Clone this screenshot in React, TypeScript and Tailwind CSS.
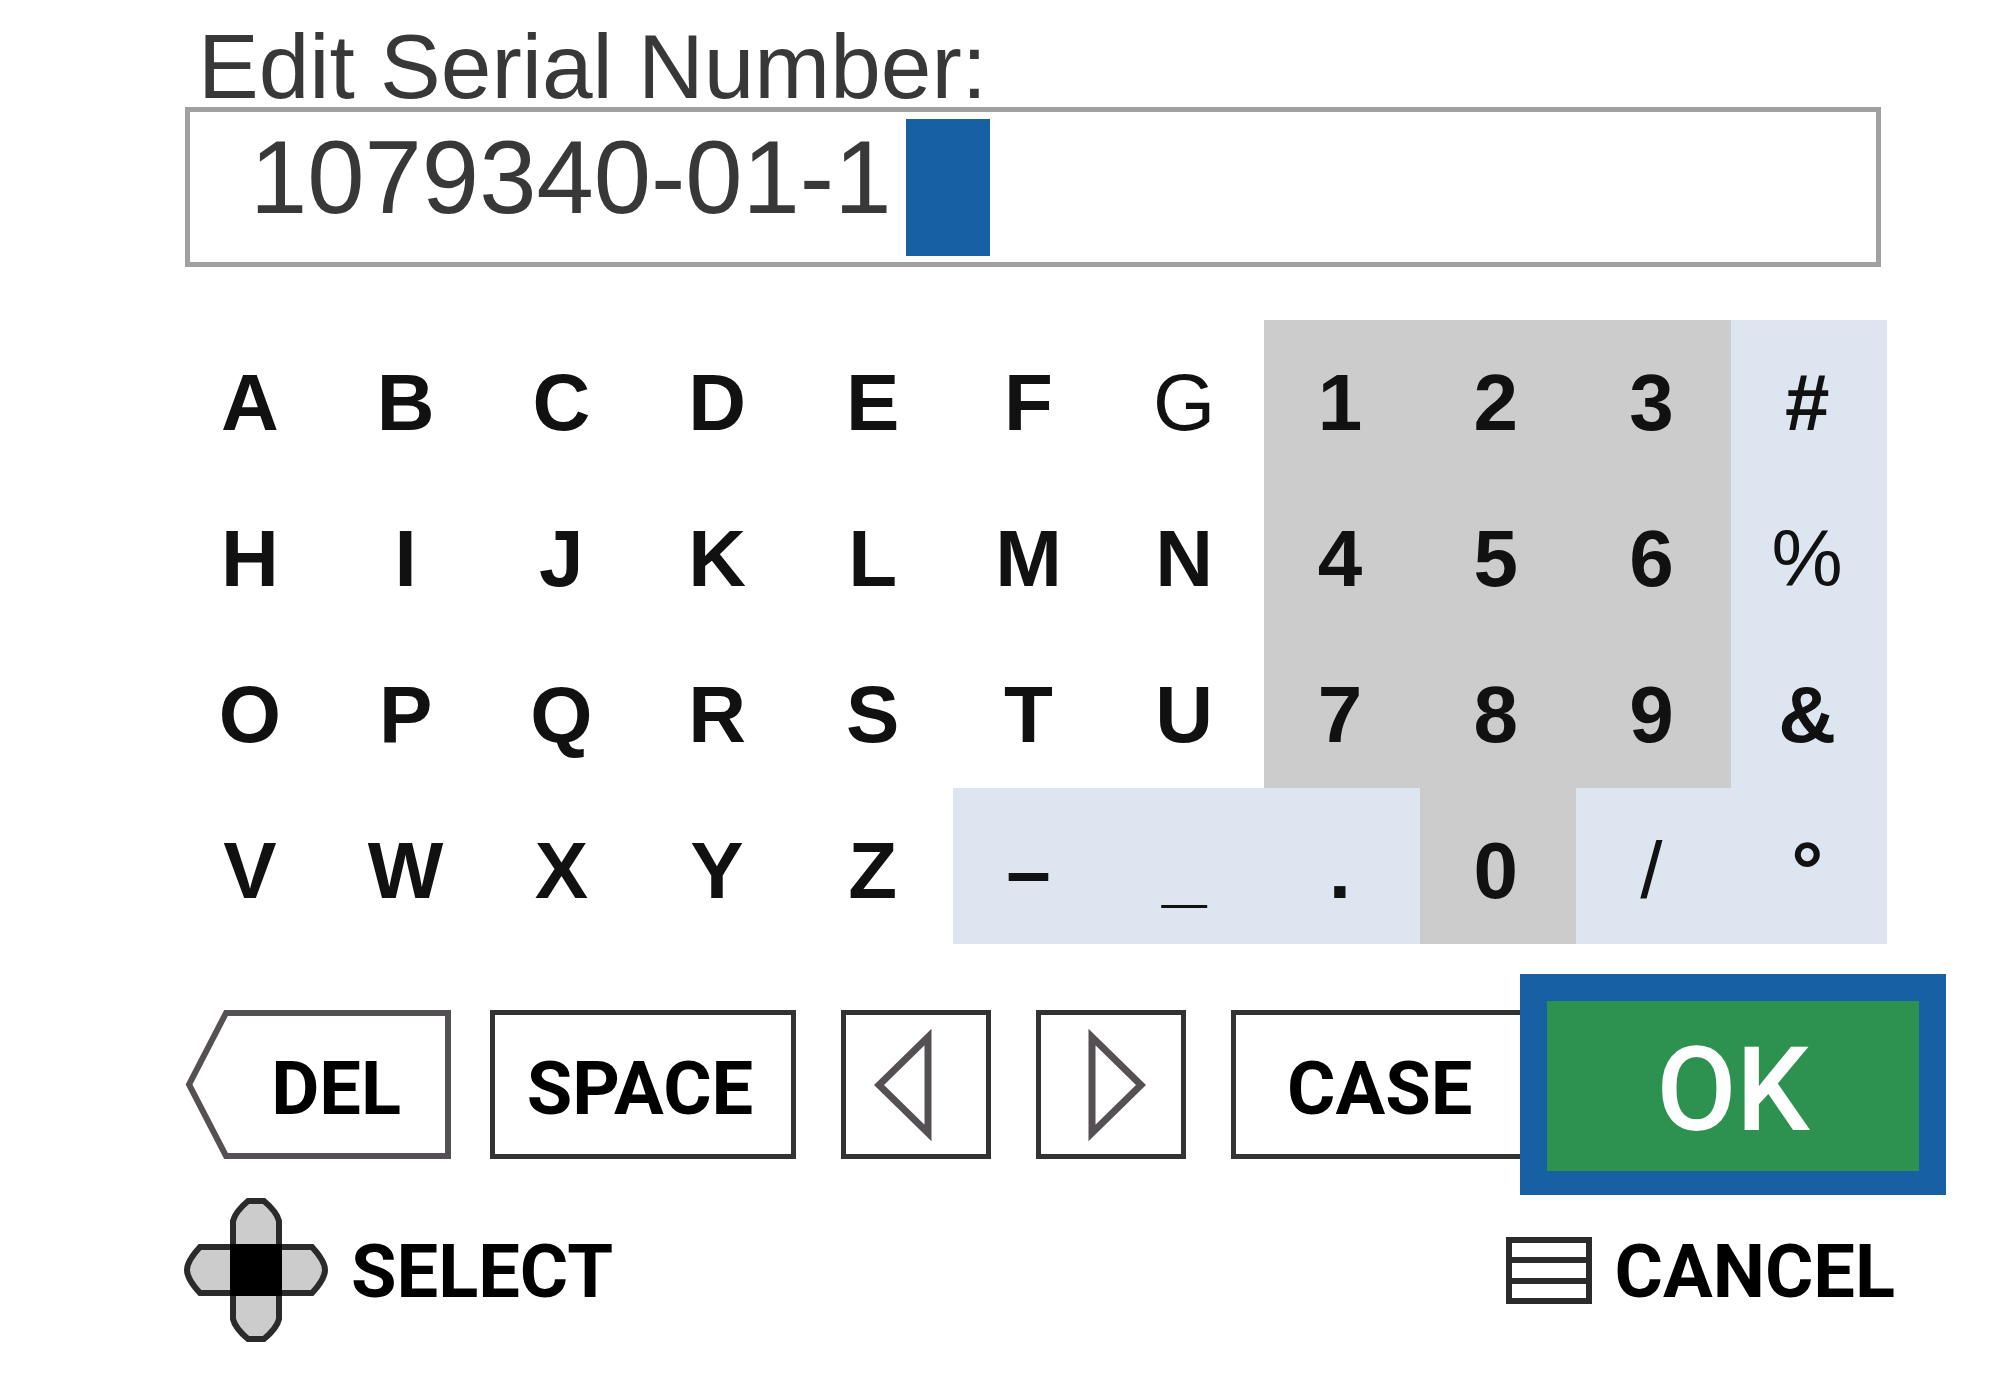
import { useState } from "react";

type Tone = "plain" | "digit" | "symbol";
type Key = { char: string; tone: Tone; light?: boolean };

const toneClass: Record<Tone, string> = {
  plain: "bg-white",
  digit: "bg-[#cccccc]",
  symbol: "bg-[#dde6f0]",
};

const LIGHT = "G%/";
const rows = ["ABCDEFG123#", "HIJKLMN456%", "OPQRSTU789&", "VWXYZ–_.0/°"];

const toneOf = (char: string): Tone => {
  if (/[A-Z]/.test(char)) return "plain";
  return /[0-9]/.test(char) ? "digit" : "symbol";
};

const keys: Key[] = rows
  .join("")
  .split("")
  .map((char) => ({ char, tone: toneOf(char), light: LIGHT.includes(char) }));

const labelText = "font-['Roboto',sans-serif] text-[74px] leading-none font-bold text-black";
const box = "flex h-[149px] shrink-0 items-center border-[5px] border-[#333333] bg-white";

function DPadIcon() {
  return (
    <svg aria-hidden="true" width="144" height="146" viewBox="0 0 144 146" fill="#cccccc" stroke="#2b2b2b" strokeWidth="6">
      <path d="M49 50V24Q51 15 64 4H80Q93 15 95 24V50M49 96V122Q51 131 64 142H80Q93 131 95 122V96" />
      <path d="M49 50H16Q3 64 3 73T16 96H49M95 50H128Q141 64 141 73T128 96H95" />
      <rect x="49" y="50" width="46" height="46" fill="#000000" stroke="#000000" />
    </svg>
  );
}

function MenuIcon() {
  return (
    <svg aria-hidden="true" width="86" height="67" viewBox="0 0 86 67" fill="none" stroke="#2b2b2b" strokeWidth="6">
      <path d="M3 3H83V64H3ZM3 23H83M3 44H83" />
    </svg>
  );
}

export default function App() {
  const [serial, setSerial] = useState("1079340-01-1");
  const add = (char: string) => setSerial(serial + char);

  return (
    <main className="min-h-screen w-full overflow-hidden bg-white pr-[113px] pl-[174px] font-['Liberation_Sans',Arial,sans-serif]">
      <label htmlFor="serial" className="block pt-[26px] pl-6 text-[91px] leading-[81px] whitespace-nowrap text-[#383838]">
        Edit Serial Number:
      </label>

      <div className="mr-[6px] ml-[11px] flex h-[160px] items-center border-[5px] border-[#a0a0a0]">
        <input
          id="serial"
          type="text"
          value={serial}
          onChange={(e) => setSerial(e.target.value)}
          className="h-full w-[716px] bg-transparent pb-[18px] pl-[60px] text-[103px] text-[#383838] outline-none"
        />
        <span className="h-[137px] w-[84px] bg-[#1760a4]" />
      </div>

      <div className="mt-[53px] grid grid-cols-11">
        {keys.map((key) => (
          <button
            key={key.char}
            type="button"
            onClick={() => add(key.char)}
            className={`flex h-[156px] items-center justify-center pt-[10px] pr-[4px] text-[80px] leading-none text-[#111111] ${
              key.light ? "font-normal" : "font-bold"
            } ${toneClass[key.tone]}`}
          >
            {key.char}
          </button>
        ))}
      </div>

      <div className="mt-[30px] -mr-[59px] ml-[11px] flex items-center">
        <button
          type="button"
          onClick={() => setSerial(serial.slice(0, -1))}
          className={`relative flex h-[149px] w-[266px] shrink-0 items-center justify-end pt-2 pr-[50px] ${labelText}`}
        >
          <svg aria-hidden="true" className="absolute inset-0" width="266" height="149" viewBox="0 0 266 149" fill="none" stroke="#555054" strokeWidth="6">
            <path d="M41 3H263V146H41L4 74.5Z" />
          </svg>
          <span className="relative">DEL</span>
        </button>
        <button type="button" onClick={() => add(" ")} className={`${box} ml-[39px] w-[306px] justify-center pt-2 pr-[6px] ${labelText}`}>
          SPACE
        </button>
        <button type="button" aria-label="Move left" className={`${box} ml-[45px] w-[150px] pl-[27px]`}>
          <svg aria-hidden="true" width="60" height="114" viewBox="0 0 60 114" fill="none" stroke="#555054" strokeWidth="7">
            <path d="M55 9V105L6 57Z" />
          </svg>
        </button>
        <button type="button" aria-label="Move right" className={`${box} ml-[45px] w-[150px] pl-[45px]`}>
          <svg aria-hidden="true" width="60" height="114" viewBox="0 0 60 114" fill="none" stroke="#555054" strokeWidth="7">
            <path d="M6 9V105L55 57Z" />
          </svg>
        </button>
        <button
          type="button"
          onClick={() => setSerial(serial.toLowerCase())}
          className={`${box} ml-[45px] grow border-r-0 pt-2 pl-[51px] ${labelText}`}
        >
          CASE
        </button>
        <button
          type="button"
          className="h-[221px] w-[426px] shrink-0 border-x-[27px] border-t-[27px] border-b-[24px] border-[#1760a4] bg-[#2d914f] pt-2 font-['Roboto',sans-serif] text-[116px] leading-none font-medium text-white"
        >
          OK
        </button>
      </div>

      <div className="mt-[2px] mr-[-8px] ml-[10px] flex items-center justify-between">
        <button type="button" className={`flex items-center gap-[23px] ${labelText}`}>
          <DPadIcon />
          <span className="pt-1">SELECT</span>
        </button>
        <button type="button" className={`flex items-center gap-[23px] ${labelText}`}>
          <MenuIcon />
          <span className="pt-1">CANCEL</span>
        </button>
      </div>
    </main>
  );
}
